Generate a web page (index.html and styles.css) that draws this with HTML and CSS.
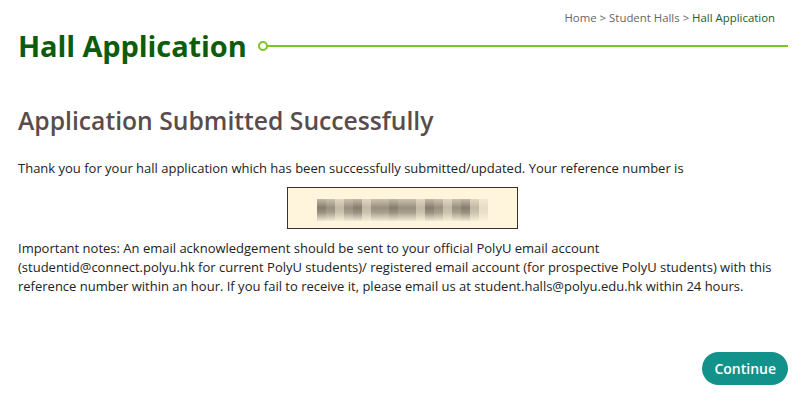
FILE: index.html
```html
<!DOCTYPE html>
<html lang="en">
  <head>
    <meta charset="UTF-8" />
    <meta name="viewport" content="width=device-width, initial-scale=1.0" />
    <title>Hall Application - Student Halls</title>
    <link rel="stylesheet" href="styles.css">
  </head>
  <body>
    <div class="page">
      <div class="breadcrumb">
        <a href="#" class="crumb">Home</a> &gt;
        <a href="#" class="crumb">Student Halls</a> &gt;
        <span class="crumb-current">Hall Application</span>
      </div>

      <header class="title-row">
        <h1>Hall Application</h1>
        <span class="title-dot"></span>
        <span class="title-line"></span>
      </header>

      <section class="result">
        <h2>Application Submitted Successfully</h2>
        <p>Thank you for your hall application which has been successfully submitted/updated. Your reference number is</p>

        <!-- reference number is blurred in the screenshot -->
        <div class="ref-box">
          <div class="ref-blur">
            <span></span><span></span><span></span><span></span><span></span><span></span><span></span><span></span><span></span><span></span><span></span><span></span><span></span><span></span><span></span><span></span><span></span><span></span><span></span>
          </div>
        </div>

        <p class="notes">Important notes: An email acknowledgement should be sent to your official PolyU email account (studentid@connect.polyu.hk for current PolyU students)/ registered email account (for prospective PolyU students) with this reference number within an hour. If you fail to receive it, please email us at student.halls@polyu.edu.hk within 24 hours.</p>
      </section>

      <div class="actions">
        <button type="button" class="btn-continue">Continue</button>
      </div>
    </div>
  </body>
</html>
```

FILE: styles.css
```css
/* General styling */
body {
  font-family: "Open Sans", "Liberation Sans", sans-serif;
  margin: 0;
  padding: 0;
  background: #fff;
  color: #222;
  font-size: 13px;
}

.page {
  padding: 10px 12px 0 18px;
}

.breadcrumb {
  text-align: right;
  font-size: 11.4px;
  color: #666;
  line-height: 16px;
  padding-right: 13px;
}

.crumb {
  color: #666;
  text-decoration: none;
}

.crumb-current {
  color: #1d5b2c;
}

.title-row {
  display: flex;
  align-items: center;
  margin-top: 0;
}

.title-row h1 {
  margin: 0;
  font-size: 29px;
  font-weight: 700;
  color: #0b5c0b;
  line-height: 40px;
  letter-spacing: -0.1px;
}

.title-dot {
  width: 6px;
  height: 6px;
  border: 2px solid #7cc520;
  border-radius: 50%;
  margin-left: 11px;
  flex-shrink: 0;
}

.title-line {
  flex: 1;
  height: 2px;
  background: #7cc520;
}

.result h2 {
  margin: 39px 0 0;
  font-size: 24.7px;
  font-weight: 600;
  color: #594c4c;
  line-height: 32px;
}

.result p {
  margin: 0;
  max-width: 760px;
  line-height: 19px;
}

.result h2 + p {
  margin-top: 22px;
}

.ref-box {
  width: 229px;
  height: 40px;
  margin: 9px 0 0 269px;
  background: #fff5dc;
  border: 1px solid #333;
  display: flex;
  align-items: center;
  justify-content: center;
}

.ref-blur {
  display: flex;
  height: 22px;
  margin-top: 4px;
}

.ref-blur span {
  width: 9px;
  height: 22px;
  background: linear-gradient(#c2b8a6, #867d6e 40%, #9a917f 62%, #f0e8d6);
  opacity: 0.85;
}

.ref-blur span:nth-child(3n) {
  opacity: 0.5;
}

.ref-blur span:nth-child(4n+1) {
  opacity: 1;
}

.ref-blur span:last-child {
  opacity: 0.2;
}

.notes {
  margin-top: 10px !important;
}

.actions {
  display: flex;
  justify-content: flex-end;
  margin-top: 56px;
}

.btn-continue {
  background: #13918b;
  color: #fff;
  font-family: "Open Sans", "Liberation Sans", sans-serif;
  font-size: 14px;
  font-weight: 600;
  padding: 0 12px;
  height: 33px;
  border: none;
  border-radius: 17px;
  cursor: pointer;
}

.btn-continue:hover {
  background: #0f7b76;
}
```
